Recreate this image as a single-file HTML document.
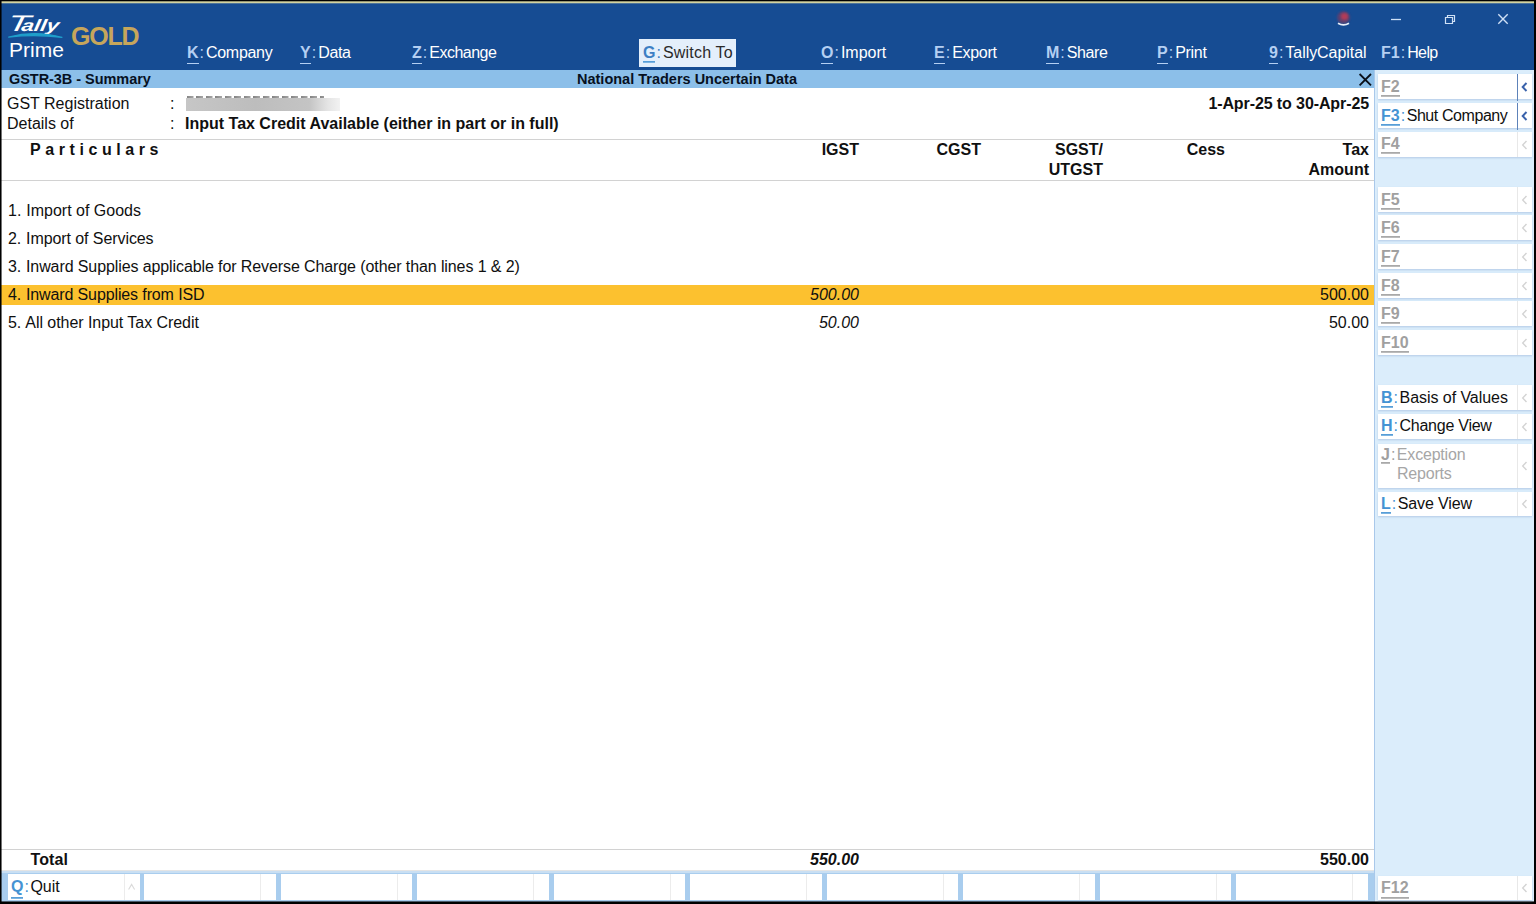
<!DOCTYPE html>
<html><head><meta charset="utf-8"><title>TallyPrime</title>
<style>
*{box-sizing:border-box;margin:0;padding:0}
html,body{width:1536px;height:904px;overflow:hidden;background:#000}
body{font-family:"Liberation Sans",Arial,sans-serif;font-size:16px;color:#101010;position:relative}
.abs{position:absolute}
#top{left:1px;top:1px;width:1533px;height:69px;background:#164c93}
#gold1{left:1px;top:1px;width:1533px;height:1px;background:#94946f}
#gold2{left:1px;top:2px;width:1533px;height:1px;background:#d3d3a2}
#gold3{left:1px;top:3px;width:1533px;height:1px;background:#4e7498}
#titlebar{left:1px;top:70px;width:1373px;height:18px;background:#8cbfe9}
#work{left:1px;top:88px;width:1373px;height:782px;background:#fff}
#right{left:1374px;top:70px;width:160px;height:832px;background:#dbedfb;border-left:1px solid #a9c8ea}
#bottom{left:1px;top:870px;width:1373px;height:32px;background:#a9cdee}
#edgeL{left:1px;top:0;width:1px;height:904px;background:rgba(0,0,0,.55)}
#edgeB{left:0;top:901px;width:1536px;height:1px;background:rgba(0,0,0,.55)}
.t{position:absolute;white-space:nowrap;line-height:20px;height:20px}
.b{font-weight:bold}
.i{font-style:italic}
.r{text-align:right}
.menu{color:#fff;top:43px;font-size:16px}
.menu .ml{letter-spacing:-0.3px}
.k{color:#b4cff2;position:relative;display:inline-block;font-weight:bold;margin-right:1px}
.k.u:after{content:"";position:absolute;left:0;right:0;bottom:-1px;height:1px;background:#b4cff2}
.mc{color:#b4cff2;margin-right:2px}
.hl{left:1px;top:285px;width:1373px;height:20px;background:#fcc12f}
.line{left:1px;width:1373px;height:1px;background:#d2d2d2}
.btn{position:absolute;left:1378px;width:153.5px;height:25px;background:#fff;box-shadow:0 1px 2px #b3cbe6}
.btn .sep{position:absolute;left:139px;top:0;bottom:0;width:1px;background:#e8e8e8}
.btn .lbl{position:absolute;left:3px;top:3px;line-height:20px;white-space:nowrap;font-size:16px}
.btn svg{position:absolute;left:143px;top:50%;margin-top:-5px}
.fk{color:#4593d3;position:relative;display:inline-block;font-weight:bold;margin-right:1px}
.fk:after{content:"";position:absolute;left:0;right:0;bottom:0px;height:2px;background:linear-gradient(#4593d3,#8fbfe6)}
.fk.q:after{bottom:-1.5px}
.fk.q2:after{bottom:-1px}
.fc{color:#4593d3;margin-right:1.5px}
.dis{color:#a6a6a6}
.dis .fk,.dis .fc{color:#a0a0a0}
.dis .fk:after{background:linear-gradient(#a0a0a0,#c4c4c4)}
.bb{position:absolute;top:874px;height:26px;width:131.5px;background:#fff}
.bb .sep{position:absolute;left:116px;top:0;bottom:0;width:1px;background:#ececec}
.n{margin-right:0.5px}
</style></head><body>
<div class="abs" id="top"></div>
<div class="abs" id="gold1"></div><div class="abs" id="gold2"></div><div class="abs" id="gold3"></div>
<div class="abs" id="titlebar"></div>
<div class="abs" id="work"></div>
<div class="abs" id="right"></div>
<div class="abs" id="bottom"></div>
<svg class="abs" style="left:4px;top:8px" width="66" height="36" viewBox="0 0 66 36">
<g fill="#fff" font-family="Liberation Sans,sans-serif" font-style="italic" font-weight="bold" transform="skewX(-10)">
<text x="6.5" y="22.6" font-size="22.5" font-weight="normal" textLength="22.5" lengthAdjust="spacingAndGlyphs">T</text>
<text x="20.7" y="22.8" font-size="16.5" textLength="37.5" lengthAdjust="spacingAndGlyphs">ally</text>
</g>
<path d="M4.6 29.1 Q 31 22 58 29.4 Q 31 26 4.6 29.1 Z" fill="#1f9fcb" stroke="#1f9fcb" stroke-width="1.1" stroke-linejoin="round"/>
</svg>
<div class="t" style="left:9px;top:38px;color:#fff;font-size:21px;line-height:24px;height:24px">Prime</div>
<div class="t b" style="left:71px;top:23px;color:#c6a65b;font-size:25px;line-height:26px;height:26px;letter-spacing:-1.2px">GOLD</div>
<div class="t menu" style="left:187px"><span class="k u">K</span><span class="mc">:</span><span style="letter-spacing:-0.3px">Company</span></div>
<div class="t menu" style="left:300px"><span class="k u">Y</span><span class="mc">:</span><span style="letter-spacing:-0.3px">Data</span></div>
<div class="t menu" style="left:412px"><span class="k u">Z</span><span class="mc">:</span><span style="letter-spacing:-0.5px">Exchange</span></div>
<div class="t menu" style="left:821px"><span class="k u">O</span><span class="mc">:</span><span style="letter-spacing:0px">Import</span></div>
<div class="t menu" style="left:934px"><span class="k u">E</span><span class="mc">:</span><span style="letter-spacing:-0.3px">Export</span></div>
<div class="t menu" style="left:1046px"><span class="k u">M</span><span class="mc">:</span><span style="letter-spacing:-0.4px">Share</span></div>
<div class="t menu" style="left:1157px"><span class="k u">P</span><span class="mc">:</span><span style="letter-spacing:-0.3px">Print</span></div>
<div class="t menu" style="left:1269px"><span class="k u">9</span><span class="mc">:</span><span style="letter-spacing:-0.05px">TallyCapital</span></div>
<div class="t menu" style="left:1381px"><span class="k">F1</span><span class="mc">:</span><span style="letter-spacing:-0.6px">Help</span></div>
<div class="abs" style="left:639px;top:39px;width:97px;height:28px;background:#e4effb"></div>
<div class="t" style="left:643px;top:43px;color:#2a2a2a;font-size:16px"><span class="fk" style="color:#3d7fc4;margin-right:1px">G</span><span style="color:#3d7fc4;margin-right:2px">:</span><span style="letter-spacing:0.2px">Switch To</span></div>
<svg class="abs" style="left:1330px;top:8px" width="190" height="24" viewBox="0 0 190 24">
<defs><filter id="bl" x="-50%" y="-50%" width="200%" height="200%"><feGaussianBlur stdDeviation="1.1"/></filter></defs>
<circle cx="13.5" cy="9.5" r="6.3" fill="#6b3f6a" opacity="0.85" filter="url(#bl)"/>
<circle cx="14.5" cy="8.5" r="3.6" fill="#c63a52" opacity="0.8" filter="url(#bl)"/>
<path d="M8 15.3 Q13.5 18.6 19 15.3" stroke="#e8eef8" stroke-width="1.8" fill="none"/>
<path d="M61 11.5 H71" stroke="#cfe0f5" stroke-width="1.3"/>
<path d="M115.5 9.5 h7 v6 h-7 z M117.5 9.5 v-2 h7 v6 h-2" stroke="#cfe0f5" stroke-width="1.2" fill="none"/>
<path d="M168.3 6.3 l9.4 9.4 M177.7 6.3 l-9.4 9.4" stroke="#cfe0f5" stroke-width="1.4"/>
</svg>
<div class="t b" style="left:9px;top:69px;font-size:14.5px;color:#07111f;letter-spacing:-0.05px">GSTR-3B - Summary</div>
<div class="t b" style="left:577px;top:69px;font-size:14.5px;color:#07111f">National Traders Uncertain Data</div>
<svg class="abs" style="left:1357px;top:72px" width="16" height="15" viewBox="0 0 16 15"><path d="M2.6 2 L14 13.4 M14 2 L2.6 13.4" stroke="#0a0f18" stroke-width="1.8"/></svg>
<div class="t" style="left:7px;top:94px">GST Registration</div>
<div class="t" style="left:170px;top:94px">:</div>
<div class="abs" style="left:187px;top:96px;width:137px;height:2px;opacity:.6;background:repeating-linear-gradient(90deg,#333 0,#666 6px,transparent 7px,transparent 9.5px)"></div>
<div class="abs" style="left:186px;top:98px;width:154px;height:13px;background:linear-gradient(90deg,#c6c6c6 0%,#bdbdbd 45%,#c4c4c4 80%,#e4e4e4 92%,#f2f2f2 100%)"></div>
<div class="t" style="left:7px;top:114px">Details of</div>
<div class="t" style="left:170px;top:114px">:</div>
<div class="t b" style="left:185px;top:114px">Input Tax Credit Available (either in part or in full)</div>
<div class="t b r" style="left:1169px;width:200px;top:94px;letter-spacing:-0.1px">1-Apr-25 to 30-Apr-25</div>
<div class="abs line" style="top:139px"></div>
<div class="abs line" style="top:180px"></div>
<div class="t b" style="left:30px;top:140px;letter-spacing:4.58px">Particulars</div>
<div class="t b r" style="left:659px;width:200px;top:140px">IGST</div>
<div class="t b r" style="left:781px;width:200px;top:140px">CGST</div>
<div class="t b r" style="left:903px;width:200px;top:140px">SGST/</div>
<div class="t b r" style="left:903px;width:200px;top:160px">UTGST</div>
<div class="t b r" style="left:1025px;width:200px;top:140px">Cess</div>
<div class="t b r" style="left:1169px;width:200px;top:140px">Tax</div>
<div class="t b r" style="left:1169px;width:200px;top:160px">Amount</div>
<div class="abs hl"></div>
<div class="t" style="left:8px;top:201px;"><span class="n">1.</span> Import of Goods</div>
<div class="t" style="left:8px;top:229px;letter-spacing:-0.08px"><span class="n">2.</span> Import of Services</div>
<div class="t" style="left:8px;top:257px;letter-spacing:-0.1px"><span class="n">3.</span> Inward Supplies applicable for Reverse Charge (other than lines 1 &amp; 2)</div>
<div class="t" style="left:8px;top:285px;letter-spacing:-0.12px"><span class="n">4.</span> Inward Supplies from ISD</div>
<div class="t" style="left:8px;top:313px;letter-spacing:-0.05px"><span class="n">5.</span> All other Input Tax Credit</div>
<div class="t i r" style="left:659px;width:200px;top:285px">500.00</div>
<div class="t  r" style="left:1169px;width:200px;top:285px">500.00</div>
<div class="t i r" style="left:659px;width:200px;top:313px">50.00</div>
<div class="t  r" style="left:1169px;width:200px;top:313px">50.00</div>
<div class="abs line" style="top:849px"></div>
<div class="t b" style="left:30.5px;top:850px;letter-spacing:0.1px">Total</div>
<div class="t b i r" style="left:659px;width:200px;top:850px">550.00</div>
<div class="t b r" style="left:1169px;width:200px;top:850px">550.00</div>
<div class="btn" style="top:74px;height:25px"><div class="lbl dis" style="top:3px;line-height:20px"><span class="fk">F2</span></div><div class="sep" style="background:#5d82b9;bottom:-2px"></div><svg width="8" height="10" viewBox="0 0 8 10"><path d="M5.5 1 L1.7 5 L5.5 9" stroke="#3a62ab" stroke-width="2" fill="none"/></svg></div>
<div class="btn" style="top:103px;height:25px"><div class="lbl" style="top:3px;line-height:20px"><span class="fk">F3</span><span class="fc">:</span><span class="tx" style=letter-spacing:-0.42px>Shut Company</span></div><div class="sep" style="background:#5d82b9;bottom:-2px"></div><svg width="8" height="10" viewBox="0 0 8 10"><path d="M5.5 1 L1.7 5 L5.5 9" stroke="#3a62ab" stroke-width="2" fill="none"/></svg></div>
<div class="btn" style="top:132px;height:25px"><div class="lbl dis" style="top:2px;line-height:20px"><span class="fk">F4</span></div><div class="sep"></div><svg width="8" height="10" viewBox="0 0 8 10"><path d="M5.5 1 L1.7 5 L5.5 9" stroke="#d4d4d4" stroke-width="1.4" fill="none"/></svg></div>
<div class="btn" style="top:187px;height:25px"><div class="lbl dis" style="top:3px;line-height:20px"><span class="fk">F5</span></div><div class="sep"></div><svg width="8" height="10" viewBox="0 0 8 10"><path d="M5.5 1 L1.7 5 L5.5 9" stroke="#d4d4d4" stroke-width="1.4" fill="none"/></svg></div>
<div class="btn" style="top:215px;height:25px"><div class="lbl dis" style="top:3px;line-height:20px"><span class="fk">F6</span></div><div class="sep"></div><svg width="8" height="10" viewBox="0 0 8 10"><path d="M5.5 1 L1.7 5 L5.5 9" stroke="#d4d4d4" stroke-width="1.4" fill="none"/></svg></div>
<div class="btn" style="top:244px;height:25px"><div class="lbl dis" style="top:3px;line-height:20px"><span class="fk">F7</span></div><div class="sep"></div><svg width="8" height="10" viewBox="0 0 8 10"><path d="M5.5 1 L1.7 5 L5.5 9" stroke="#d4d4d4" stroke-width="1.4" fill="none"/></svg></div>
<div class="btn" style="top:273px;height:25px"><div class="lbl dis" style="top:3px;line-height:20px"><span class="fk">F8</span></div><div class="sep"></div><svg width="8" height="10" viewBox="0 0 8 10"><path d="M5.5 1 L1.7 5 L5.5 9" stroke="#d4d4d4" stroke-width="1.4" fill="none"/></svg></div>
<div class="btn" style="top:301px;height:25px"><div class="lbl dis" style="top:3px;line-height:20px"><span class="fk">F9</span></div><div class="sep"></div><svg width="8" height="10" viewBox="0 0 8 10"><path d="M5.5 1 L1.7 5 L5.5 9" stroke="#d4d4d4" stroke-width="1.4" fill="none"/></svg></div>
<div class="btn" style="top:330px;height:25px"><div class="lbl dis" style="top:3px;line-height:20px"><span class="fk">F10</span></div><div class="sep"></div><svg width="8" height="10" viewBox="0 0 8 10"><path d="M5.5 1 L1.7 5 L5.5 9" stroke="#d4d4d4" stroke-width="1.4" fill="none"/></svg></div>
<div class="btn" style="top:385px;height:25px"><div class="lbl" style="top:3px;line-height:20px"><span class="fk">B</span><span class="fc">:</span><span class="tx" style=letter-spacing:-0.05px>Basis of Values</span></div><div class="sep"></div><svg width="8" height="10" viewBox="0 0 8 10"><path d="M5.5 1 L1.7 5 L5.5 9" stroke="#d4d4d4" stroke-width="1.4" fill="none"/></svg></div>
<div class="btn" style="top:414px;height:25px"><div class="lbl" style="top:2px;line-height:20px"><span class="fk">H</span><span class="fc">:</span><span class="tx" style=letter-spacing:-0.25px>Change View</span></div><div class="sep"></div><svg width="8" height="10" viewBox="0 0 8 10"><path d="M5.5 1 L1.7 5 L5.5 9" stroke="#d4d4d4" stroke-width="1.4" fill="none"/></svg></div>
<div class="btn" style="top:444px;height:44px"><div class="lbl dis" style="top:1px;line-height:19px"><span class="fk">J</span><span class="fc">:</span><span class="tx" style=letter-spacing:-0.2px>Exception<br><span style="padding-left:16px">Reports</span></span></div><div class="sep"></div><svg width="8" height="10" viewBox="0 0 8 10"><path d="M5.5 1 L1.7 5 L5.5 9" stroke="#d4d4d4" stroke-width="1.4" fill="none"/></svg></div>
<div class="btn" style="top:492px;height:24px"><div class="lbl" style="top:2px;line-height:20px"><span class="fk">L</span><span class="fc">:</span><span class="tx" style=letter-spacing:-0.12px>Save View</span></div><div class="sep"></div><svg width="8" height="10" viewBox="0 0 8 10"><path d="M5.5 1 L1.7 5 L5.5 9" stroke="#d4d4d4" stroke-width="1.4" fill="none"/></svg></div>
<div class="btn" style="top:876px;height:24px"><div class="lbl dis" style="top:2px;line-height:20px"><span class="fk q2">F12</span></div><div class="sep"></div><svg width="8" height="10" viewBox="0 0 8 10"><path d="M5.5 1 L1.7 5 L5.5 9" stroke="#d4d4d4" stroke-width="1.4" fill="none"/></svg></div>
<div class="abs" style="left:1px;top:870px;width:1373px;height:1px;background:#e4e4e4"></div>
<div class="abs" style="left:1px;top:871px;width:1373px;height:2px;background:#c9dff3"></div>
<div class="bb" style="left:8.00px"><div class="sep"></div></div>
<div class="bb" style="left:144.45px"><div class="sep"></div></div>
<div class="bb" style="left:280.90px"><div class="sep"></div></div>
<div class="bb" style="left:417.35px"><div class="sep"></div></div>
<div class="bb" style="left:553.80px"><div class="sep"></div></div>
<div class="bb" style="left:690.25px"><div class="sep"></div></div>
<div class="bb" style="left:826.70px"><div class="sep"></div></div>
<div class="bb" style="left:963.15px"><div class="sep"></div></div>
<div class="bb" style="left:1099.60px"><div class="sep"></div></div>
<div class="bb" style="left:1236.05px"><div class="sep"></div></div>
<div class="t" style="left:11px;top:877px"><span class="fk q">Q</span><span class="fc">:</span>Quit</div>
<svg class="abs" style="left:127px;top:883px" width="9" height="8" viewBox="0 0 9 8"><path d="M1.6 6.6 L4.6 1.4 L7.6 6.6" stroke="#dadada" stroke-width="1.1" fill="none"/></svg>
<div class="abs" id="edgeL"></div><div class="abs" id="edgeB"></div>
</body></html>
